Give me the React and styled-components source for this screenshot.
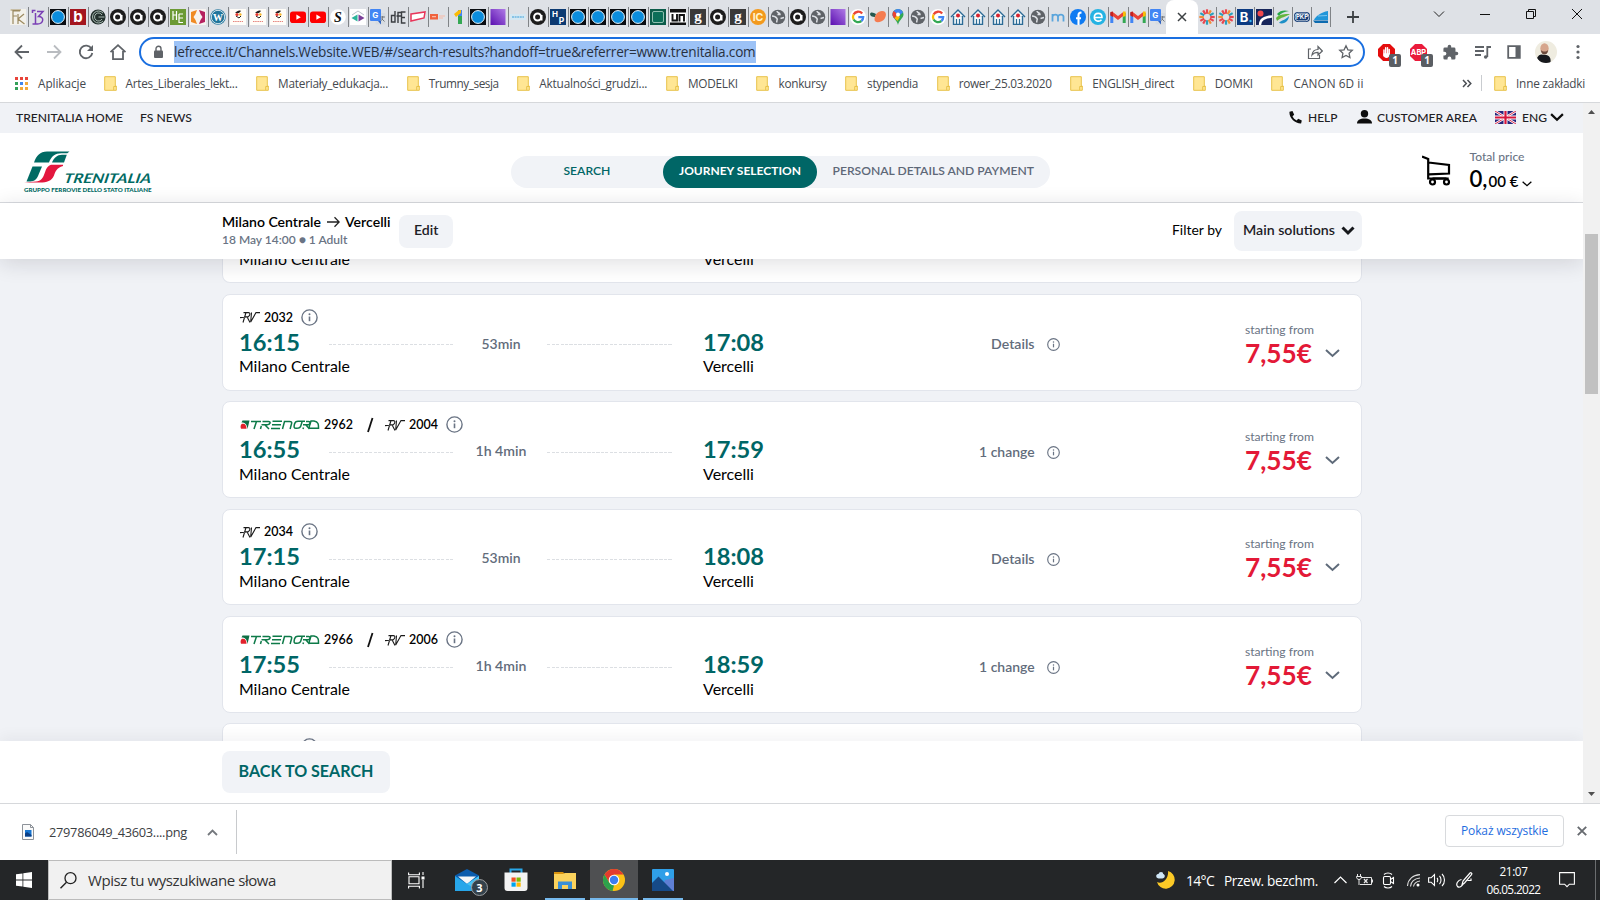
import React, { useLayoutEffect, useRef } from "react";
import styled, { createGlobalStyle } from "styled-components";

const Global = createGlobalStyle`
  * { box-sizing: border-box; }
  html, body { margin: 0; padding: 0; overflow: hidden; background: #fff; }
  body { width: 1600px; height: 900px; font-family: "Open Sans", "Noto Sans", sans-serif; }
  svg { display: block; flex: none; }
`;

const LATO = `Lato, "Open Sans", sans-serif`;

/* ---------- text that keeps a fixed measure ---------- */

const Line = styled.span`
  display: block;
  flex: none;
  white-space: nowrap;
  width: ${(p) => p.$w}px;
  margin-left: ${(p) => p.$ml || 0}px;
  font-size: ${(p) => p.$size}px;
  font-weight: ${(p) => p.$weight || 400};
  line-height: ${(p) => p.$lh || 16}px;
  color: ${(p) => p.$color || "inherit"};
`;

function Text({ w, children, grow, ...rest }) {
  const ref = useRef(null);
  useLayoutEffect(() => {
    const el = ref.current;
    el.style.letterSpacing = "";
    el.style.fontSize = "";
    const natural = el.getBoundingClientRect().width;
    if (grow) {
      const size = parseFloat(getComputedStyle(el).fontSize);
      el.style.fontSize = `${(size * w) / natural}px`;
    } else {
      el.style.letterSpacing = `${(w - natural) / el.textContent.length}px`;
    }
  }, [w, children, grow]);
  return (
    <Line $w={w} {...rest}>
      <span ref={ref}>{children}</span>
    </Line>
  );
}
const Sys = (p) => <Text {...p} />;
const Lat = (p) => <Text grow {...p} />;

/* ---------- browser: tab strip ---------- */

const Screen = styled.div`
  width: 1600px;
  height: 900px;
  display: flex;
  flex-direction: column;
  overflow: hidden;
`;
const TabStrip = styled.div`
  height: 34px;
  flex: none;
  background: #dee1e6;
  display: flex;
  padding-left: 10px;
`;
const Tab = styled.div`
  width: ${(p) => p.$w || 20}px;
  height: 34px;
  flex: none;
  display: flex;
  align-items: center;
  &::after {
    content: "";
    width: 1px;
    height: 20px;
    margin-left: ${(p) => (p.$w ? 1 : 2)}px;
    background: ${(p) => (p.$last ? "transparent" : "#808387")};
  }
`;
const ActiveTab = styled.div`
  width: 32px;
  height: 34px;
  flex: none;
  margin-left: -4px;
  background: #fff;
  border-radius: 8px 8px 0 0;
  display: flex;
  align-items: center;
  justify-content: center;
`;
const AfterTabs = styled.div`
  display: flex;
  margin-left: 1px;
`;
const WindowButtons = styled.div`
  display: flex;
  align-items: center;
  height: 34px;
  svg { width: 16px; height: 16px; }
  svg:nth-child(1) { margin-left: 13px; }
  svg:nth-child(2) { margin-left: 70px; margin-top: -6px; }
  svg:nth-child(3) { margin-left: 30px; margin-top: -6px; }
  svg:nth-child(4) { margin-left: 30px; margin-top: -6px; }
  svg:nth-child(5) { margin-left: 30px; margin-top: -6px; }
`;

const glyph = (text, fill, size = 12, y = 12.3, extra = {}) => (
  <text x="8" y={y} textAnchor="middle" fontSize={size} fontWeight="700" fill={fill} fontFamily="Inter, sans-serif" {...extra}>
    {text}
  </text>
);
const rays = Array.from({ length: 12 }, (_, i) => i * 30);

const favicons = {
  fk: (<><rect width="16" height="16" fill="#f3f1ea" /><path d="M3 15V2h7M3 7h4M8 5v10M14 5l-6 5 6.500 5M.5 1H11" stroke="#9c8a60" fill="none" strokeWidth="1.200" /></>),
  beta: (<><path d="M2.500 4v-2.500h3M7 2.500h6l-4.500 5c6.500 0 5 7.500-1 7.500h-5M5.500 4v11" stroke="#7a3fb5" fill="none" strokeWidth="1.500" /></>),
  o: (<><rect width="16" height="16" fill="#0a0d12" /><circle cx="8" cy="8" r="6.4" fill="#0a8cdc" stroke="#e9f4fb" strokeWidth="1" /></>),
  b: (<><rect width="16" height="16" fill="#a4161f" />{glyph("b", "#fff", 15, 13.2)}</>),
  c: (<><circle cx="8" cy="8" r="7.6" fill="#23302d" /><path d="M13 4a6 6 0 1 0 0 8M12 6a4 4 0 1 0 0 4M8.500 8h6" stroke="#b8c9c2" fill="none" strokeWidth=".9" /></>),
  a: (<><circle cx="8" cy="8" r="8" fill="#1c1c1c" /><circle cx="7.600" cy="8" r="3.500" stroke="#fff" fill="none" strokeWidth="2" /><path d="M11.500 6v5.500" stroke="#fff" strokeWidth="2" /></>),
  he: (<><rect width="16" height="16" fill="#6c9a34" /><path d="M3 2v9M6.500 2v9M3 6h3.500M9 5v9M9 5h4M9 9h4M9 13.500h4" stroke="#fff" fill="none" strokeWidth="1.200" /></>),
  bracket: (<><rect width="16" height="16" fill="#f7f3f0" /><path d="M7 1 1 3v10l6 2-1.500-4L3.500 8l2-3z" fill="#f08a24" /><path d="M9 1l6 2v10l-6 2 1.500-4 2-3-2-3z" fill="#b5215f" /></>),
  wp: (<><circle cx="8" cy="8" r="7.800" fill="#21759b" /><circle cx="8" cy="8" r="6.700" fill="none" stroke="#fff" strokeWidth=".8" />{glyph("W", "#fff", 10, 11.500, { fontFamily: "Liberation Serif" })}</>),
  dot: (<><rect width="16" height="16" fill="#fffdf8" /><path d="M5 4c2-2 4-3 6-2l-2 2z" fill="#222" /><path d="m6 7 3 2 2-2" stroke="#222" fill="none" /><circle cx="7" cy="5.500" r="1.600" fill="#e4372c" /><circle cx="10.300" cy="5.500" r="1.300" fill="#f5b62a" /><path d="M3 12.500h10" stroke="#e5837d" strokeDasharray="1.500 .7" /></>),
  yt: (<><rect y="2.500" width="16" height="11.500" rx="2.800" fill="#f00" /><path d="M6.400 5.600v5.200l4.400-2.600z" fill="#fff" /></>),
  s: (<><circle cx="8" cy="8" r="7.800" fill="#fff" />{glyph("S", "#111", 14, 12.800, { fontStyle: "italic", fontFamily: "Liberation Serif" })}</>),
  diamond: (<><rect width="16" height="16" fill="#fff" /><path d="M2 6 8 2l6 4" stroke="#b9c0c9" fill="none" /><path d="M7.500 5.500v7L1.500 9z" fill="#2bb59b" /><path d="M8.500 5.500v7l6-3.500z" fill="#7b3f98" /></>),
  translate: (<><rect x="5.500" y="4" width="10" height="11.500" rx="1" fill="#d7dbe0" /><rect y="0" width="11" height="12" rx="1" fill="#4285f4" /><path d="m8 12 3 3.500V12z" fill="#2f62c0" />{glyph("G", "#fff", 8, 9, { x: 5.200 })}<path d="M10.500 8h4.500M12.700 7v1c0 2-1 3-2 4M11.500 9.500l3 3" stroke="#6b7076" fill="none" strokeWidth=".9" /></>),
  dfe: (<path d="M5 2v11H1.500V6.500H5M8 14V3.500h3M6.500 7H11M15.500 3h-4v11h4M11.500 8.500h3.500" stroke="#3b3e42" fill="none" strokeWidth="1.400" />),
  redbox: (<><path d="m1 5 14-2-1 6-13 3z" fill="#fff" stroke="#e8355a" strokeWidth="1.500" /></>),
  orange: (<><rect y="5" width="8" height="5.500" fill="#f0623d" /><path d="M2 7.700h4M9 7h6M9 9h4" stroke="#f8b9a6" strokeWidth="1.200" /></>),
  one: (<><path d="M10 1v14" stroke="#34a853" strokeWidth="4" /><path d="M8 1h4v6H8z" fill="#4285f4" /><path d="m4 5 5-4h2v3L6 8z" fill="#fbbc04" /></>),
  purple: (<><defs><linearGradient id="pg" x1="0" y1="1" x2="1" y2="0"><stop offset="0" stopColor="#5a0fb0" /><stop offset="1" stopColor="#b07be6" /></linearGradient></defs><rect x=".5" width="15" height="16" fill="url(#pg)" /></>),
  sky: (<><rect y="5" width="16" height="6" fill="#d4e7f2" /><path d="M2 8h12" stroke="#86c3e6" strokeWidth="2.200" strokeDasharray="2 .6" /></>),
  hp: (<><rect width="16" height="16" fill="#0c3a72" />{glyph("H", "#fff", 8, 7.500, { x: 5 })}{glyph("P", "#fff", 8.500, 14.500, { x: 11.500 })}</>),
  green: (<><rect width="16" height="16" fill="#0c5c4a" /><rect x="2.500" y="2.500" width="11" height="11" rx="1.500" fill="#0b6e58" stroke="#8fbfb0" strokeWidth="1" /></>),
  un: (<><rect width="16" height="16" fill="#fff" /><rect width="16" height="3.500" fill="#111" /><path d="M2.500 5v6.500H7V5M9.500 12.500V6H14v6.500" stroke="#111" fill="none" strokeWidth="1.900" /><rect y="13.500" width="16" height="2.500" fill="#111" /></>),
  g: (<><rect width="16" height="16" fill="#3a3a3a" />{glyph("g", "#fff", 15, 11.800, { fontFamily: "Liberation Serif" })}</>),
  ic: (<><circle cx="8" cy="8" r="8" fill="#f39a1e" />{glyph("IC", "#fff3cf", 10.500, 11.800)}</>),
  globe: (<><circle cx="8" cy="8" r="7.300" fill="#5f6368" /><path d="M2 7c3 0 4 1 5 2.500s-1 2 0 4M7 2c0 2 3 1.500 3 3.500H7.500M10.500 9.500 14 8.500" stroke="#dee1e6" strokeWidth="1.500" fill="none" /></>),
  google: (<><circle cx="8" cy="8" r="8" fill="#fff" /><g fill="none" strokeWidth="2.300"><path d="M12.200 4.600A5.200 5.200 0 0 0 3.600 5.500" stroke="#ea4335" /><path d="M3.600 5.500a5.200 5.200 0 0 0 0 5" stroke="#fbbc05" /><path d="M3.600 10.500a5.200 5.200 0 0 0 7.800 1.500" stroke="#34a853" /><path d="M11.400 12A5 5 0 0 0 13.200 8.100H8.300" stroke="#4285f4" /></g></>),
  salmon: (<><path d="M0 5c1-3 4-1 6 0l-1 3C2 8 0 7 0 5z" fill="#23574f" /><path d="M4.500 10.500C4.500 6 8 2 12 2c5 0 4.500 5 2.500 8s-10 5-10 .5z" fill="#f57c51" /></>),
  pin: (<><path d="M8 0a5.500 5.500 0 0 1 5.500 5.500C13.500 9 9 11 8 16 7 11 2.500 9 2.500 5.500A5.500 5.500 0 0 1 8 0z" fill="#34a853" /><path d="M8 0a5.500 5.500 0 0 1 5 3.500L5 10C3.500 8.500 2.500 7.200 2.500 5.500A5.500 5.500 0 0 1 8 0z" fill="#4285f4" /><path d="M3.800 2 8 5.500 4.500 9.500C3.300 8 2.500 7 2.500 5.500 2.500 4 3 3 3.800 2z" fill="#ea4335" /><path d="m4.500 9.300 3-3.500L10 8l-2.500 4z" fill="#fbbc04" /><circle cx="8" cy="5.500" r="2" fill="#fff" /></>),
  house: (<><path d="M1 8 8 1l7 7M3.500 7v8.500h9V7" stroke="#2c6b96" fill="#f6fafc" strokeWidth="1.400" /><circle cx="8" cy="6.500" r="2" fill="#d9232e" /><path d="M6.500 10v5.500M9.500 10v5.500" stroke="#2c6b96" strokeWidth="1.200" /></>),
  m: (<path d="M2.500 12.500V5M2.500 7.500c1-2.500 5-2.500 5.500 0v5M8 7.500c1-2.500 5-2.500 5.500 0v5" stroke="#5aa5dc" strokeWidth="1.800" fill="none" />),
  fb: (<><circle cx="8" cy="8" r="8" fill="#0f7bf2" /><path d="M8.500 16V6c0-2 1-2.500 3-2.300M6 9.300h5" stroke="#fff" strokeWidth="2.100" fill="none" /></>),
  e: (<><circle cx="8" cy="8" r="8" fill="#25b3e3" /><path d="M4.500 8.500h7.500C12 3 4.500 3 4.300 8.300c0 4 5 5 7.200 2.400" stroke="#fff" strokeWidth="1.600" fill="none" /></>),
  gmail: (<><path d="M1.800 14V4" stroke="#4285f4" strokeWidth="3" /><path d="M14.200 14V4" stroke="#34a853" strokeWidth="3" /><path d="M1.500 4 8 9l6.500-5" stroke="#ea4335" strokeWidth="3" fill="none" /><path d="M13 2.500h2.700V7L13 8z" fill="#fbbc04" /><path d="M.3 3 3 2.500V8L.3 6.500z" fill="#c5221f" /></>),
  sun: (<g>{rays.map((r, i) => (<path key={r} d="M8 .3v4.500" stroke={["#e8474f", "#f28c38", "#2a9fbc", "#e8474f"][i % 4]} strokeWidth="2.200" transform={`rotate(${r} 8 8)`} />))}</g>),
  booking: (<><rect width="16" height="16" fill="#0b3a82" />{glyph("B", "#fff", 13, 12.800, { x: 7 })}<circle cx="13.500" cy="12" r="1.200" fill="#37b5f0" /></>),
  navy: (<><rect width="16" height="16" fill="#17255a" /><circle cx="4.500" cy="4.500" r="3" fill="#f2494c" /><path d="M4 16c0-5 3-8 12-8.500" stroke="#fff" strokeWidth="2.300" fill="none" /></>),
  swirl: (<><path d="M2 5c3-4 8-4 12-3-5 1-8 2-10 5z" fill="#2ba84a" /><path d="M1 9c3-4 9-4 14-4-4 3-9 3-13 7z" fill="#63b53c" /><path d="M4 14c2-3 7-3 10-7 0 4-4 9-10 7z" fill="#1d8fc7" /></>),
  pkp: (<><rect y="3" width="16" height="10" rx="4" fill="#153d77" /><rect x="1.200" y="4.200" width="13.600" height="7.600" rx="3" fill="none" stroke="#fff" strokeWidth=".7" />{glyph("PKP", "#fff", 6, 10.200)}</>),
  train: (<><path d="M15 2v9H1c1-3 7-8 14-9z" fill="#2196d9" /><path d="M0 11.500h15V14H2z" fill="#0d6bb0" /><path d="m5 7 9-.5" stroke="#7cc6f0" /></>),
};
const Favicon = ({ name }) => (
  <svg width="16" height="16" viewBox="0 0 16 16">{favicons[name]}</svg>
);

const leftTabs = ("fk beta o b c a a a he bracket wp dot dot dot yt yt s diamond translate dfe redbox orange one o purple sky " +
  "a hp o o o o green un g a g ic globe a globe purple google salmon pin globe google house house house house globe m fb e gmail gmail translate").split(" ");
const rightTabs = "sun sun booking navy swirl pkp train".split(" ");

const TabBar = () => (
  <TabStrip>
    {leftTabs.map((n, i) => (
      <Tab key={i} $last={i === leftTabs.length - 1}><Favicon name={n} /></Tab>
    ))}
    <ActiveTab>
      <svg width="10" height="10" viewBox="0 0 10 10"><path d="m1 1 8 8M9 1 1 9" stroke="#3c4043" strokeWidth="1.500" /></svg>
    </ActiveTab>
    <AfterTabs>
      {rightTabs.map((n, i) => (<Tab key={i} $w={19}><Favicon name={n} /></Tab>))}
    </AfterTabs>
    <WindowButtons>
      <svg viewBox="0 0 16 16"><path d="M8 2v12M2 8h12" stroke="#3c4043" strokeWidth="1.800" /></svg>
      <svg viewBox="0 0 16 16"><path d="m3 5.500 5 5 5-5" stroke="#222" fill="none" /></svg>
      <svg viewBox="0 0 16 16"><path d="M3 8.500h10" stroke="#111" /></svg>
      <svg viewBox="0 0 16 16"><path d="M3.500 5.500h7v7h-7zM5.500 5V3.500h7v7H11" stroke="#111" fill="none" /></svg>
      <svg viewBox="0 0 16 16"><path d="m3 3 10 10M13 3 3 13" stroke="#111" /></svg>
    </WindowButtons>
  </TabStrip>
);

/* ---------- browser: toolbar ---------- */

const Toolbar = styled.div`
  height: 36px;
  flex: none;
  display: flex;
  align-items: center;
  padding-left: 12px;
  background: #fff;
`;
const NavIcons = styled.div`
  display: flex;
  gap: 12px;
  width: 127px;
  color: #5f6368;
`;
const Omnibox = styled.div`
  width: 1226px;
  height: 30px;
  flex: none;
  border: 2px solid #1a6fe0;
  border-radius: 15px;
  display: flex;
  align-items: center;
  padding-left: 10px;
  color: #5f6368;
`;
const Selection = styled.div`
  height: 22px;
  width: 582px;
  flex: none;
  margin: 0 551px 0 8px;
  padding-top: 1px;
  background: #9cc2f6;
  color: #28313f;
`;
const OmniActions = styled.div`
  display: flex;
  gap: 15px;
`;
const Extensions = styled.div`
  display: flex;
  align-items: center;
  margin-left: 9px;
  gap: 8px;
  color: #5f6368;
`;
const Extension = styled.div`
  position: relative;
  width: 24px;
  height: 24px;
  display: flex;
  align-items: center;
  justify-content: center;
`;
const Count = styled.span`
  position: absolute;
  right: -3px;
  bottom: -3px;
  width: 12px;
  height: 13px;
  border-radius: 2px;
  background: #5a5e63;
  color: #fff;
  font-size: 10px;
  font-weight: 700;
  line-height: 13px;
  text-align: center;
`;

const Ico = ({ d, s = 20, sw = 1.8, vb = 20, children, fill = "none" }) => (
  <svg width={s} height={s} viewBox={`0 0 ${vb} ${vb}`} fill={fill} stroke={fill === "none" ? "currentColor" : "none"} strokeWidth={sw}>
    {d && <path d={d} />}
    {children}
  </svg>
);

const OCTAGON = "M6 0h8l6 6v8l-6 6H6l-6-6V6z";

const ToolbarRow = () => (
  <Toolbar>
    <NavIcons>
      <Ico d="M17 10H4M10 3.500 3.500 10l6.500 6.500" />
      <svg width="20" height="20" viewBox="0 0 20 20" fill="none" stroke="#b9bcc0" strokeWidth="1.800"><path d="M3 10h13M10 3.500l6.500 6.500-6.500 6.500" /></svg>
      <Ico><path d="M15.500 6.700A6.300 6.300 0 1 0 16.300 11" /><path d="M17 3v6h-6z" fill="currentColor" stroke="none" /></Ico>
      <Ico d="M2.500 10.200 10 3.200l7.500 7M5 9v8.200h10V9" />
    </NavIcons>
    <Omnibox>
      <svg width="15" height="15" viewBox="0 0 15 15"><rect x="3" y="5.500" width="9" height="7.500" rx="1" fill="#5f6368" /><path d="M5 6V3.800a2.500 2.500 0 0 1 5 0V6" stroke="#5f6368" strokeWidth="1.400" fill="none" /></svg>
      <Selection>
        <Sys w={581.500} $size={13.6} $lh={20}>lefrecce.it/Channels.Website.WEB/#/search-results?handoff=true&amp;referrer=www.trenitalia.com</Sys>
      </Selection>
      <OmniActions>
        <Ico s={16} sw={1.200} vb={16} d="M4 5H1.500v9.500h11V11M5 11c.5-4 3-5.500 6-5.500V2.500L15.300 7 11 11V8.300C8.500 8.300 6.500 9 5 11z" />
        <Ico s={16} sw={1.300} vb={16} d="m8 1.800 1.900 4 4.400.5-3.200 3 .8 4.300L8 11.500l-3.900 2.100.8-4.300-3.200-3 4.400-.5z" />
      </OmniActions>
    </Omnibox>
    <Extensions>
      <Extension>
        <svg width="17" height="17" viewBox="0 0 20 20"><path d={OCTAGON} fill="#e40d0d" /><path d="M7 14V7M9 12V4.500M11.200 12V4.500M13.200 13V6.500" stroke="#fff" strokeWidth="1.700" strokeLinecap="round" /><path d="M6.500 11h7.500c0 4-2 5.500-4 5.500s-3-1.500-3.500-3z" fill="#fff" /></svg>
        <Count>1</Count>
      </Extension>
      <Extension>
        <svg width="17" height="17" viewBox="0 0 20 20"><path d={OCTAGON} fill="#ea1b3b" /><text x="10" y="13.300" textAnchor="middle" fontSize="8.800" fontWeight="700" fill="#fff" fontFamily="Inter">ABP</text></svg>
        <Count>1</Count>
      </Extension>
      <Extension><Ico s={17} vb={24} fill="currentColor" d="M20.500 11H19V7a2 2 0 0 0-2-2h-4V3.500a2.500 2.500 0 0 0-5 0V5H4a2 2 0 0 0-2 2v3.800h1.500a2.700 2.700 0 0 1 0 5.400H2V20a2 2 0 0 0 2 2h3.800v-1.500a2.700 2.700 0 0 1 5.400 0V22H17a2 2 0 0 0 2-2v-4h1.500a2.500 2.500 0 0 0 0-5z" /></Extension>
      <Extension><Ico s={17} vb={17}><path d="M1 3h9M1 7h9M1 11h6M13.300 13V3H17" /><circle cx="11.700" cy="13" r="1.800" fill="currentColor" stroke="none" /></Ico></Extension>
      <Extension><Ico s={14} vb={14}><path d="M1.200 1.200h11.600v11.600H1.200z" /><path d="M8.500 1h4.500v12H8.500z" fill="currentColor" stroke="none" /></Ico></Extension>
      <Extension>
        <svg width="22" height="22" viewBox="0 0 22 22"><clipPath id="av"><circle cx="11" cy="11" r="11" /></clipPath><g clipPath="url(#av)"><rect width="22" height="22" fill="#efece0" /><path d="M2 17c2-4 4-4 8-3 4 0 7 3 5 9H6z" fill="#17191d" /><ellipse cx="9.500" cy="7.500" rx="4.200" ry="5.300" fill="#d6a58c" /><path d="M6 9c0 6 7 6 7 0-1 1.500-2 1.500-3.500 1.500S7 10.500 6 9z" fill="#6b4a3c" /></g></svg>
      </Extension>
      <Extension><Ico s={16} vb={16} fill="currentColor"><circle cx="8" cy="2.500" r="1.600" /><circle cx="8" cy="8" r="1.600" /><circle cx="8" cy="13.500" r="1.600" /></Ico></Extension>
    </Extensions>
  </Toolbar>
);

/* ---------- browser: bookmarks ---------- */

const Bookmarks = styled.div`
  height: 33px;
  flex: none;
  display: flex;
  align-items: center;
  padding: 0 0 6px 14px;
  border-bottom: 1px solid #d6d8db;
  background: #fff;
  color: #45494e;
`;
const Bookmark = styled.div`
  display: flex;
  align-items: center;
  margin-right: ${(p) => (p.$first ? 17.5 : 18.6)}px;
`;
const Overflow = styled.div`
  display: flex;
  align-items: center;
  width: 20px;
  height: 16px;
  margin: 0 12px 0 80px;
  border-right: 1px solid #c9ccd0;
`;
const Folder = () => (
  <svg width="13" height="15" viewBox="0 0 13 15"><path d="M.7.700h10.600v9.300h1v4.300H.7z" fill="#ffe694" stroke="#e8c24a" /><path d="M9.700 14v-3.500h2.500" fill="none" stroke="#e8c24a" /></svg>
);
const folders = [
  ["Artes_Liberales_lekt...", 112], ["Materiały_edukacja...", 110], ["Trumny_sesja", 70], ["Aktualności_grudzi...", 108],
  ["MODELKI", 50], ["konkursy", 48], ["stypendia", 51], ["rower_25.03.2020", 93], ["ENGLISH_direct", 82], ["DOMKI", 38], ["CANON 6D ii", 70],
];
const appColors = ["#e8443a", "#e8443a", "#e8443a", "#34a058", "#3f86ee", "#f2a93b", "#34a058", "#f2a93b", "#f2a93b"];
const BookmarkBar = () => (
  <Bookmarks>
    <Bookmark $first>
      <svg width="14" height="14" viewBox="0 0 14 14">
        {appColors.map((c, i) => (
          <rect key={i} x={1 + (i % 3) * 5} y={1 + Math.floor(i / 3) * 5} width="3" height="3" fill={c} />
        ))}
      </svg>
      <Sys w={48} $ml={10} $size={11.8}>Aplikacje</Sys>
    </Bookmark>
    {folders.map(([t, w]) => (
      <Bookmark key={t}><Folder /><Sys w={w} $ml={9} $size={11.8}>{t}</Sys></Bookmark>
    ))}
    <Overflow>
      <svg width="10" height="9" viewBox="0 0 10 9"><path d="m1 1 3.300 3.500L1 8M5.500 1l3.300 3.500L5.500 8" stroke="#4a4e53" strokeWidth="1.500" fill="none" /></svg>
    </Overflow>
    <Folder /><Sys w={69} $ml={9} $size={11.8}>Inne zakładki</Sys>
  </Bookmarks>
);

/* ---------- site ---------- */

const Viewport = styled.div`
  height: 700px;
  flex: none;
  display: flex;
`;
const Page = styled.div`
  width: 1583px;
  height: 700px;
  display: flex;
  flex-direction: column;
  font-family: ${LATO};
  background: #f0f2f6;
  overflow: hidden;
`;
const Scrollbar = styled.div`
  width: 17px;
  background: #f1f1f1;
  display: flex;
  flex-direction: column;
  align-items: center;
  padding: 7px 0;
`;
const Thumb = styled.div`
  width: 13px;
  height: 160px;
  margin: 120px 0 auto;
  background: #c1c1c1;
`;
const UtilityBar = styled.div`
  height: 30px;
  flex: none;
  display: flex;
  align-items: center;
  padding: 0 0 2px 16px;
  color: #1e2024;
  svg { color: #0d0d0d; }
`;
const Header = styled.div`
  height: 70px;
  flex: none;
  display: flex;
  align-items: flex-start;
  padding: 18px 0 0 23px;
  background: #fff;
  border-bottom: 1px solid #d9dbdf;
`;
const Stepper = styled.div`
  display: flex;
  width: 539px;
  height: 32px;
  margin: 5px 0 0 358px;
  border-radius: 16px;
  background: #f1f3f7;
`;
const Step = styled.div`
  width: ${(p) => p.$width}px;
  height: 32px;
  padding: 6px 0 0 ${(p) => p.$pad}px;
  border-radius: 16px;
  background: ${(p) => (p.$active ? "#006666" : "transparent")};
`;
const Cart = styled.div`
  margin: 4px 0 0 372px;
`;
const Total = styled.div`
  margin-left: 17.5px;
`;
const Amount = styled.div`
  display: flex;
  align-items: baseline;
  height: 28px;
  margin-top: 0.5px;
  color: #000;
`;
const TripBar = styled.div`
  position: relative;
  height: 56px;
  flex: none;
  display: flex;
  align-items: flex-start;
  padding-left: 222px;
  background: #fff;
  box-shadow: 0 4px 22px rgba(20, 24, 36, 0.14);
`;
const Trip = styled.div`
  padding-top: 10px;
  width: 177px;
`;
const Route = styled.div`
  display: flex;
  align-items: center;
  height: 18px;
  color: #000;
`;
const EditButton = styled.div`
  width: 54px;
  height: 33px;
  margin-top: 12px;
  padding: 6px 0 0 15px;
  border-radius: 8px;
  background: #f1f3f7;
`;
const FilterLabel = styled.div`
  margin: 18px 12px 0 719px;
`;
const FilterSelect = styled.div`
  width: 128px;
  height: 40px;
  margin-top: 8px;
  padding: 0 0 2px 9px;
  border-radius: 8px;
  background: #f1f3f7;
  display: flex;
  align-items: center;
  svg { margin-top: 2px; }
`;
const Results = styled.div`
  height: 482px;
  flex: none;
  overflow: hidden;
  display: flex;
  flex-direction: column;
  padding-left: 222px;
`;
const Card = styled.div`
  width: 1140px;
  height: 96.6px;
  flex: none;
  margin-bottom: 10.7px;
  padding-left: 16px;
  display: flex;
  background: #fff;
  border: 1px solid #e2e5ec;
  border-radius: 8px;
`;
const ScrolledCard = styled(Card)`
  height: 24.4px;
  border-top: none;
  border-radius: 0 0 8px 8px;
  align-items: flex-start;
  overflow: hidden;
`;
const NextCard = styled(Card)`
  margin-bottom: 0;
  padding-top: 13px;
`;
const Departure = styled.div`
  width: 464px;
  padding-top: ${(p) => (p.$wide ? 13.6 : 13)}px;
`;
const Trains = styled.div`
  height: 18px;
  display: flex;
  align-items: center;
`;
const TimeRow = styled.div`
  height: 31px;
  display: flex;
  align-items: center;
`;
const Dashes = styled.div`
  width: 126px;
  height: 1px;
  flex: none;
  margin: 6px 0 0 ${(p) => p.$ml}px;
  background: repeating-linear-gradient(90deg, #dcdfe3 0 3px, transparent 3px 4.5px);
`;
const Duration = styled.div`
  width: 92px;
  flex: none;
  display: flex;
  justify-content: center;
  margin-top: 4px;
`;
const Arrival = styled.div`
  width: 200px;
  padding-top: ${(p) => (p.$wide ? 31.6 : 31)}px;
`;
const Details = styled.div`
  width: 156.6px;
  padding-top: ${(p) => (p.$wide ? 41.6 : 41)}px;
  display: flex;
  justify-content: flex-end;
  svg { margin: 2px 0 0 12px; }
`;
const Fare = styled.div`
  width: 67px;
  margin-left: 185.4px;
  padding-top: 26.6px;
`;
const Toggle = styled.div`
  margin: 53.6px 0 0 13px;
`;
const Footer = styled.div`
  position: relative;
  height: 62px;
  flex: none;
  padding: 10px 0 0 222px;
  background: #fff;
  box-shadow: 0 -4px 14px rgba(20, 24, 36, 0.05);
`;
const BackButton = styled.div`
  width: 168px;
  height: 42px;
  padding: 10px 0 0 16.6px;
  border-radius: 8px;
  background: #f1f3f7;
`;
const Slash = styled.div`
  width: 32px;
  padding-left: 13px;
`;

const Info = ({ s }) => (
  <svg width={s} height={s} viewBox="0 0 17 17"><circle cx="8.500" cy="8.500" r="7.600" fill="none" stroke="#6a7484" strokeWidth={s > 15 ? 1.400 : 1.500} /><path d="M8.500 7.500v4.700" stroke="#6a7484" strokeWidth="1.600" /><circle cx="8.500" cy="5.200" r="1" fill="#6a7484" /></svg>
);
const RV = () => (
  <svg width="20" height="16" viewBox="0 0 20 16"><g fill="none" stroke="#1a1a1a" strokeWidth="1.100"><path d="M6 3.500 3 13.500M3.500 3.600h5c2 0 1.800 2.500 0 4L0 8.600M7 7.800l3 5.800" /><path d="M11.500 3.500 10.700 13 16 3.600h4" /></g></svg>
);
const Trenord = () => (
  <svg width="80" height="11" viewBox="0 0 80 11">
    <path d="M2.500 1.500h7L7.500 10C7 5 5 3.500 1.500 3.500z" fill="#0d6e43" /><path d="M1 9.800c-1-3 0-5 2-5 2.500 0 3.500 2 3.500 5z" fill="#e2222c" />
    <g fill="none" stroke="#0d7a48" strokeWidth="1.500" transform="translate(0 1)">
      <path d="M11 1.500h10M16.500 1.500 14 9M22.500 1.500h6c2.500 0 2 3-1 3.200h-6M20.500 9l.8-3M25 5l4 4M42 1.200H32.500M41 4.700h-9M40 8.500h-9" />
      <path d="M42.500 9l2-7.500h5c2 0 2.500.7 2.100 2L50.100 9M65 1.200h-7c-2.500 0-3 .8-3.500 2.800-.8 3-.5 4.300 1.500 4.300s4.300.3 5-3L62.300 1M66 1.500h2.500c2.500 0 2 3-.5 3.200h-5M63 9l.5-1.500M66 5l3.500 4" />
      <path d="M71 1h3c5 1 4.500 4 4.500 7.300h-8.500c-1.200 0-.8-1-.5-2.500z" />
    </g>
  </svg>
);
const FsMark = () => (
  <>
    <path d="M11 11.500C13.500 4.500 17 .8 24 .5h22.500l-2.200 1.800h-6c-6 0-10 3-12.300 9.200z" fill="#006a63" />
    <path d="M29 11.500c2-4.500 5-7.700 10-7.700h4.800L41 11.500z" fill="#006a63" />
    <path d="M9.500 15.500H19l-4 9.500c-2 4.500-5 5.500-9 5.500H3.500z" fill="#006a63" />
    <path d="M1 31.500h16c7 0 11.500-1.500 14-7 1.500-4 2.500-7.500 9-9.500v-1.200H28c-3 1-4.500 3-6 7.500-2 6-4 9-9 9.300z" fill="#e3173e" />
  </>
);
const LogoBox = styled.div`
  width: 130px;
  height: 44px;
`;
const Logo = () => (
  <LogoBox>
    <svg width="130" height="44" viewBox="0 0 130 44">
      <FsMark />
      <text transform="translate(40.500 31.500) skewX(-10)" fontFamily="Lato" fontWeight="700" fontStyle="italic" fontSize="13.300" fill="#006a63" textLength="87" lengthAdjust="spacingAndGlyphs">TRENITALIA</text>
      <text x="1" y="41" fontFamily="Lato" fontWeight="900" fontSize="6.400" fill="#006a63" textLength="127.500" lengthAdjust="spacingAndGlyphs">GRUPPO FERROVIE DELLO STATO ITALIANE</text>
    </svg>
  </LogoBox>
);
const Flag = () => (
  <svg width="21" height="13" viewBox="0 0 21 13">
    <rect width="21" height="13" fill="#26247b" />
    <path d="m0 0 21 13M21 0 0 13" stroke="#fff" strokeWidth="2.400" /><path d="m0 0 21 13M21 0 0 13" stroke="#d6173c" strokeWidth=".9" />
    <path d="M10.500 0v13M0 6.500h21" stroke="#fff" strokeWidth="4" /><path d="M10.500 0v13M0 6.500h21" stroke="#d6173c" strokeWidth="2.200" />
  </svg>
);
const Chevron = ({ w, h, sw, color = "currentColor" }) => (
  <svg width={w} height={h} viewBox={`0 0 ${w} ${h}`} fill="none" stroke={color} strokeWidth={sw}><path d={`M${sw / 2} ${sw / 2} ${w / 2} ${h - sw} ${w - sw / 2} ${sw / 2}`} /></svg>
);
const Spacer = styled.div`
  width: ${(p) => p.$w}px;
  flex: none;
`;
const ClippedCity = styled.div`
  width: ${(p) => p.$w}px;
  margin-top: -9px;
`;

const trips = [
  { rv: "2032", dep: "16:15", arr: "17:08", dur: "53min", dw: 39 },
  { trenord: "2962", rv: "2004", dep: "16:55", arr: "17:59", dur: "1h 4min", dw: 51 },
  { rv: "2034", dep: "17:15", arr: "18:08", dur: "53min", dw: 39 },
  { trenord: "2966", rv: "2006", dep: "17:55", arr: "18:59", dur: "1h 4min", dw: 51 },
];

const TrainLine = ({ trenord, rv }) => (
  <Trains>
    <Spacer $w={1} />
    {trenord && (
      <>
        <Trenord />
        <Lat w={29} $ml={4} $size={13} $weight={600}>{trenord}</Lat>
        <Slash><svg width="9" height="18" viewBox="0 0 9 18"><path d="m2 16 4.500-14" stroke="#111" strokeWidth="1.800" /></svg></Slash>
      </>
    )}
    <RV />
    <Lat w={29} $ml={4} $size={13} $weight={600}>{rv}</Lat>
    <Spacer $w={8} />
    <Info s={17} />
  </Trains>
);

const TripCard = ({ trip }) => {
  const wide = Boolean(trip.trenord);
  return (
    <Card>
      <Departure $wide={wide}>
        <TrainLine trenord={trip.trenord} rv={trip.rv} />
        <TimeRow>
          <Lat w={61} $size={24} $weight={700} $lh={30} $color="#006666">{trip.dep}</Lat>
          <Dashes $ml={29} />
          <Duration><Lat w={trip.dw} $size={14} $weight={600} $color="#626c7b">{trip.dur}</Lat></Duration>
          <Dashes $ml={0} />
        </TimeRow>
        <Lat w={111} $size={16} $lh={18}>Milano Centrale</Lat>
      </Departure>
      <Arrival $wide={wide}>
        <TimeRow><Lat w={61} $size={24} $weight={700} $lh={30} $color="#006666">{trip.arr}</Lat></TimeRow>
        <Lat w={51} $size={16} $lh={18}>Vercelli</Lat>
      </Arrival>
      <Details $wide={wide}>
        <Lat w={wide ? 55.5 : 43.5} $size={14} $weight={600} $color="#626c7b">{wide ? "1 change" : "Details"}</Lat>
        <Info s={13} />
      </Details>
      <Fare>
        <Lat w={69} $size={12} $color="#6a7484">starting from</Lat>
        <Lat w={67} $size={26} $weight={700} $lh={30} $color="#e31937">7,55€</Lat>
      </Fare>
      <Toggle><Chevron w={15} h={9} sw={2} color="#5f6b7a" /></Toggle>
    </Card>
  );
};

const Site = () => (
  <Viewport>
    <Page>
      <UtilityBar>
        <Lat w={107} $size={13} $weight={500}>TRENITALIA HOME</Lat>
        <Lat w={52} $ml={17} $size={13} $weight={500}>FS NEWS</Lat>
        <Spacer $w={1097} />
        <svg width="13" height="13" viewBox="0 0 13 13"><path d="M.5.800 3.500 0l1.700 3.700-1.700 1.500c.9 1.900 2 3.100 4.100 4.200l1.600-1.600 3.600 1.600-.7 3.100C6 12.700-.2 6.500.500.800z" fill="currentColor" /></svg>
        <Lat w={29.500} $ml={6} $size={13} $weight={500}>HELP</Lat>
        <Spacer $w={19.5} />
        <svg width="15" height="14" viewBox="0 0 15 14"><circle cx="7.500" cy="3.700" r="3.700" fill="currentColor" /><path d="M0 13.500C0 10 3 8.500 7.500 8.500S15 10 15 13.500z" fill="currentColor" /></svg>
        <Lat w={100} $ml={5} $size={13} $weight={500}>CUSTOMER AREA</Lat>
        <Spacer $w={18} />
        <Flag />
        <Lat w={25} $ml={6} $size={13} $weight={500}>ENG</Lat>
        <Spacer $w={3} />
        <Chevron w={14} h={9} sw={2.2} />
      </UtilityBar>
      <Header>
        <Logo />
        <Stepper>
          <Step $width={152} $pad={52.5}><Lat w={47} $lh={18} $size={12.5} $weight={600} $color="#006666">SEARCH</Lat></Step>
          <Step $width={154} $pad={16} $active><Lat w={122} $lh={18} $size={12.5} $weight={700} $color="#fff">JOURNEY SELECTION</Lat></Step>
          <Step $width={233} $pad={15.5}><Lat w={202} $lh={18} $size={12.5} $weight={600} $color="#5e6878">PERSONAL DETAILS AND PAYMENT</Lat></Step>
        </Stepper>
        <Cart>
          <svg width="30" height="31" viewBox="0 0 30 31" fill="none" stroke="#000" strokeWidth="2.200"><path d="M0 1.500 6.200 4v19.500h20.500M6.500 7.500 27 10v8.500L7 19.300" /><circle cx="10.500" cy="27" r="2.500" /><circle cx="24.500" cy="27" r="2.500" /><path d="M10.500 23.500h14" /></svg>
        </Cart>
        <Total>
          <Lat w={55} $size={12} $weight={500} $color="#6a7484" $lh={12}>Total price</Lat>
          <Amount>
            <Lat w={18} $size={24} $weight={600} $lh={28}>0,</Lat>
            <Lat w={30} $ml={1} $size={16} $weight={600} $lh={28}>00 €</Lat>
            <Spacer $w={3.5} /><Chevron w={10} h={6} sw={1.3} />
          </Amount>
        </Total>
      </Header>
      <TripBar>
        <Trip>
          <Route>
            <Lat w={99} $size={14} $weight={600}>Milano Centrale</Lat>
            <Spacer $w={6} />
            <svg width="13" height="12" viewBox="0 0 13 12"><path d="M0 6h12M7.500 1.200 12.200 6l-4.700 4.800" stroke="#222" strokeWidth="1.300" fill="none" /></svg>
            <Lat w={45.500} $ml={5} $size={14} $weight={600}>Vercelli</Lat>
          </Route>
          <Lat w={125.500} $size={12.5} $weight={600} $color="#6a7484" $lh={17}>18 May 14:00 ● 1 Adult</Lat>
        </Trip>
        <EditButton><Lat w={24.500} $size={14} $weight={600} $color="#1d2026" $lh={18}>Edit</Lat></EditButton>
        <FilterLabel><Lat w={50} $size={14} $lh={18}>Filter by</Lat></FilterLabel>
        <FilterSelect>
          <Lat w={92} $size={14} $weight={600} $color="#1d2026" $lh={18}>Main solutions</Lat>
          <Spacer $w={6} /><Chevron w={14} h={10} sw={3} color="#16181c" />
        </FilterSelect>
      </TripBar>
      <Results>
        <ScrolledCard>
          <ClippedCity $w={464}><Lat w={111} $size={16} $lh={18}>Milano Centrale</Lat></ClippedCity>
          <ClippedCity $w={200}><Lat w={51} $size={16} $lh={18}>Vercelli</Lat></ClippedCity>
        </ScrolledCard>
        {trips.map((t) => (<TripCard key={t.rv} trip={t} />))}
        <NextCard><TrainLine rv="2036" /></NextCard>
      </Results>
      <Footer>
        <BackButton><Lat w={135} $size={16} $weight={700} $color="#006666" $lh={20}>BACK TO SEARCH</Lat></BackButton>
      </Footer>
    </Page>
    <Scrollbar>
      <svg width="7" height="4" viewBox="0 0 7 4"><path d="M0 4 3.500 0 7 4z" fill="#505050" /></svg>
      <Thumb />
      <svg width="7" height="4" viewBox="0 0 7 4"><path d="M0 0 3.500 4 7 0z" fill="#505050" /></svg>
    </Scrollbar>
  </Viewport>
);

/* ---------- download shelf ---------- */

const Shelf = styled.div`
  height: 57px;
  flex: none;
  display: flex;
  align-items: center;
  border-top: 1px solid #d6d8db;
  background: #fff;
  color: #3c4043;
`;
const Download = styled.div`
  width: 237px;
  height: 44px;
  display: flex;
  align-items: center;
  padding-left: 22px;
  border-right: 1px solid #c8cacd;
`;
const ShowAll = styled.div`
  width: 119px;
  height: 32px;
  margin: -2px 13px 0 1208px;
  padding: 7px 0 0 15px;
  border: 1px solid #d8dadd;
  border-radius: 4px;
`;
const CloseShelf = styled.div`
  margin-top: -2px;
`;
const DownloadShelf = () => (
  <Shelf>
    <Download>
      <svg width="12" height="16" viewBox="0 0 12 16"><path d="M.5.500h8l3 3v12H.5z" fill="#fafafa" stroke="#8d9299" /><path d="M8.500.500v3h3" fill="none" stroke="#8d9299" /><rect x="3" y="6" width="6.500" height="6.500" fill="#1776d2" /><path d="m3 12.500 0-3 2-1.500 4.500 3v1.500z" fill="#0b3f86" /></svg>
      <Sys w={138} $ml={15} $size={12.8} $lh={18}>279786049_43603....png</Sys>
      <Spacer $w={20} />
      <svg width="11" height="7" viewBox="0 0 11 7"><path d="m1 6 4.500-4.500L10 6" stroke="#74787d" strokeWidth="1.800" fill="none" /></svg>
    </Download>
    <ShowAll><Sys w={87} $size={12} $weight={500} $color="#1f6de0">Pokaż wszystkie</Sys></ShowAll>
    <CloseShelf>
      <svg width="10" height="10" viewBox="0 0 10 10"><path d="m.8.800 8.400 8.400M9.200.800.800 9.200" stroke="#676b70" strokeWidth="1.900" /></svg>
    </CloseShelf>
  </Shelf>
);

/* ---------- taskbar ---------- */

const Taskbar = styled.div`
  height: 40px;
  flex: none;
  display: flex;
  background: #242628;
  color: #fff;
`;
const TaskButton = styled.div`
  position: relative;
  width: ${(p) => p.$w || 48}px;
  height: 40px;
  flex: none;
  display: flex;
  align-items: center;
  justify-content: center;
  background: ${(p) => (p.$active ? "#4f5052" : "transparent")};
  box-shadow: ${(p) => (p.$open ? "inset 0 -2px 0 #76b9ed" : "none")};
  margin-left: ${(p) => p.$ml || 0}px;
`;
const SearchBox = styled.div`
  width: 344px;
  height: 40px;
  display: flex;
  align-items: center;
  padding-left: 11px;
  background: #f1f1f1;
  border: 1px solid #bcbcbc;
  color: #333;
`;
const MailBadge = styled.span`
  position: absolute;
  right: 6px;
  bottom: 4px;
  width: 17px;
  height: 17px;
  border: 1px solid #9b9d9f;
  border-radius: 50%;
  background: #34424c;
  color: #fff;
  font-size: 11px;
  font-weight: 700;
  line-height: 15px;
  text-align: center;
`;
const Tray = styled.div`
  display: flex;
  align-items: center;
  margin-left: 472px;
`;
const Weather = styled.div`
  display: flex;
  padding-top: 2px;
`;
const Clock = styled.div`
  width: 54px;
  margin-left: 13.5px;
`;
const Peek = styled.div`
  width: 1px;
  height: 40px;
  margin-left: 20px;
  background: #6b6d6f;
`;
const WinTaskbar = () => (
  <Taskbar>
    <TaskButton>
      <svg width="16" height="16" viewBox="0 0 16 16" fill="#fff"><path d="M0 2.300 6.500 1.400v6.200H0zM7.300 1.300 16 0v7.600H7.300zM0 8.400h6.500v6.200L0 13.700zM7.300 8.400H16V16l-8.700-1.300z" /></svg>
    </TaskButton>
    <SearchBox>
      <svg width="17" height="17" viewBox="0 0 17 17"><circle cx="10.500" cy="6.200" r="5.500" fill="none" stroke="#222" strokeWidth="1.300" /><path d="m6.500 10.300-6 6" stroke="#222" strokeWidth="1.400" /></svg>
      <Sys w={188} $ml={11} $size={15} $lh={20}>Wpisz tu wyszukiwane słowa</Sys>
    </SearchBox>
    <TaskButton>
      <svg width="17" height="17" viewBox="0 0 17 17" fill="none" stroke="#fff" strokeWidth="1.100"><path d="M1 4.800h10v7H1zM.600.500v2.200h10.800V.500M.600 16.500v-2.200h10.800v2.200M15 0v3M15 8v8" /><rect x="13.500" y="4.500" width="3" height="3" fill="#fff" stroke="none" /></svg>
    </TaskButton>
    <TaskButton $w={54}>
      <svg width="24" height="23" viewBox="0 0 24 23"><path d="M0 6.500 12 0l12 6.500V22H0z" fill="#0b5cad" /><path d="M3 7.500h18L12 15z" fill="#f4f6f8" /><path d="M0 7v15h24V7l-12 8z" fill="#27a6ea" /><path d="m12 15 12-8v15z" fill="#45c3f5" /></svg>
      <MailBadge>3</MailBadge>
    </TaskButton>
    <TaskButton $w={43}>
      <svg width="24" height="24" viewBox="0 0 24 24"><path d="M6.500 6V1.500h11V6" fill="none" stroke="#29a8ea" strokeWidth="2" /><path d="M.5 4.500h23V20a3 3 0 0 1-3 3h-17a3 3 0 0 1-3-3z" fill="#f3f3f3" /><rect x="7.500" y="9.500" width="4.200" height="4.200" fill="#f25022" /><rect x="12.500" y="9.500" width="4.200" height="4.200" fill="#7fba00" /><rect x="7.500" y="14.500" width="4.200" height="4.200" fill="#00a4ef" /><rect x="12.500" y="14.500" width="4.200" height="4.200" fill="#ffb900" /></svg>
    </TaskButton>
    <TaskButton $w={40} $ml={8} $open>
      <svg width="22" height="19" viewBox="0 0 22 19"><path d="M0 1h9l2 2H0z" fill="#d9930f" /><path d="M0 3h9l2-1h11v16H0z" fill="#fbd25c" /><path d="M4 18v-7.500h14V18h-4v-4H8v4z" fill="#3a8fd6" /></svg>
    </TaskButton>
    <TaskButton $ml={5} $open $active>
      <svg width="22" height="22" viewBox="0 0 22 22"><circle cx="11" cy="11" r="11" fill="#fbc116" /><path d="M1.500 5.500a11 11 0 0 1 19 0H11L6.300 13.700z" fill="#e33b2e" /><path d="M1.500 5.500 6.300 13.700 11 16.500 9.500 22A11 11 0 0 1 1.500 5.500z" fill="#2da14c" /><circle cx="11" cy="11" r="5.300" fill="#fff" /><circle cx="11" cy="11" r="4.200" fill="#3c7df0" /></svg>
    </TaskButton>
    <TaskButton $w={40} $ml={5} $open>
      <svg width="22" height="22" viewBox="0 0 22 22"><rect width="22" height="22" rx="1" fill="#2f9fe8" /><path d="M13 11 22 9v13H9z" fill="#5f7fd4" /><path d="M0 14 6.500 7.500 21 22H0z" fill="#164a87" /><circle cx="15" cy="5" r="2" fill="#fff" /></svg>
    </TaskButton>
    <Tray>
      <svg width="20" height="18" viewBox="0 0 20 18"><path d="M13 0a9 9 0 1 1-11 11c5 3 12-3 11-11z" fill="#fbc926" /><ellipse cx="5.500" cy="5" rx="4.300" ry="2.600" fill="#cfe6f7" /><circle cx="6" cy="3.300" r="2.300" fill="#cfe6f7" /></svg>
      <Weather>
        <Sys w={28} $ml={11} $size={14} $lh={20}>14°C</Sys>
        <Sys w={94} $ml={10} $size={13.6} $lh={20}>Przew. bezchm.</Sys>
      </Weather>
      <Spacer $w={16} />
      <svg width="13" height="8" viewBox="0 0 13 8"><path d="m.5 7 6-6 6 6" stroke="#fff" strokeWidth="1.200" fill="none" /></svg>
      <Spacer $w={9} />
      <svg width="17" height="12" viewBox="0 0 17 12" fill="none" stroke="#e8e8e8"><path d="M5 3.500h10.500v7H4M16.500 5.500v3M1.500 0v2.500M4.500 0v2.500M.500 2.500h5c0 2-1 3-2.500 3s-2.500-1-2.500-3zM3 5.500V11" /><path d="m8 5 3.500 4M11.500 5 8 9" strokeWidth="1.200" /></svg>
      <Spacer $w={9} />
      <svg width="14" height="17" viewBox="0 0 14 17" fill="none" stroke="#fff" strokeWidth="1.100"><rect x="1.500" y="4.500" width="7" height="8" rx="1.200" /><path d="m8.500 7.500 3-2v6l-3-2M2 2.500C4 .500 8 .500 10 2.500M2 14.500c2 2 6 2 8 0" /></svg>
      <Spacer $w={11} />
      <svg width="14" height="13" viewBox="0 0 14 13" fill="none" stroke="#ddd" strokeWidth="1.100"><path d="M.5 12C1 5 6 1 13 .600M3.500 12.500C4 7.500 7.500 4.500 13 4M6.500 12.500c.500-3 3-5 6.500-5.500" /><circle cx="11" cy="11" r="1.500" fill="#fff" stroke="none" /></svg>
      <Spacer $w={7} />
      <svg width="18" height="14" viewBox="0 0 18 14" fill="none" stroke="#fff" strokeWidth="1.100"><path d="M.600 4.800h2.500L6.500 1.500v11L3.100 9.200H.600zM9 5c1 1 1 3 0 4M11.500 3c2 2 2 6 0 8M14 1c3.300 3 3.300 9 0 12" /></svg>
      <Spacer $w={10} />
      <svg width="17" height="17" viewBox="0 0 17 17" fill="none" stroke="#fff" strokeWidth="1.200"><path d="m6 13 1-4 7-8c1-.800 2.500.500 1.500 1.700L8.500 11zM5.500 7.500C2 8-.500 12 1.500 14.500c2 2 5-1 6-3M11.500 8.500h3.500v-2" /></svg>
      <Clock>
        <Sys w={28} $ml={13} $size={11.8} $lh={17}>21:07</Sys>
        <Sys w={54} $size={11.8} $lh={18}>06.05.2022</Sys>
      </Clock>
      <Spacer $w={18} />
      <svg width="16" height="16" viewBox="0 0 16 16" fill="none" stroke="#fff" strokeWidth="1.100"><path d="M.600.600h14.800v11.600h-5L8 14.600l-2.400-2.400h-5z" /></svg>
      <Peek />
    </Tray>
  </Taskbar>
);

export default function App() {
  return (
    <Screen>
      <Global />
      <TabBar />
      <ToolbarRow />
      <BookmarkBar />
      <Site />
      <DownloadShelf />
      <WinTaskbar />
    </Screen>
  );
}
